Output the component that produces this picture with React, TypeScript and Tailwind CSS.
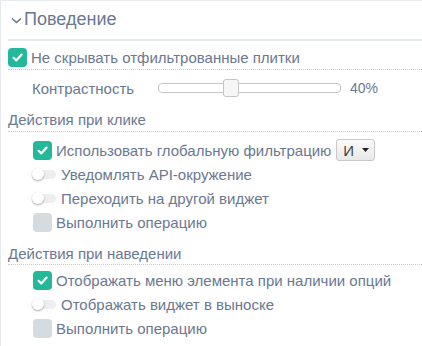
import React from 'react';

const font = { fontFamily: '"Liberation Sans", Arial, sans-serif' };

function Check({ on }: { on: boolean }) {
    return (
        <span
            className={`flex w-[19px] h-[19px] shrink-0 items-center justify-center rounded-[4px] ${
                on ? 'bg-[#22b899]' : 'bg-[#d6dbdf]'
            }`}
        >
            {on && (
                <svg width="13" height="13" viewBox="0 0 13 13" fill="none">
                    <path d="M2.5 6.8 L5.3 9.4 L10.6 3.6" stroke="white" strokeWidth="2.2" strokeLinecap="round" strokeLinejoin="round" />
                </svg>
            )}
        </span>
    );
}

function Toggle() {
    return (
        <span className="relative flex w-[24px] h-[12px] shrink-0 items-center">
            <span className="absolute left-[4px] right-0 h-[9px] rounded-full bg-[#eceef0]" />
            <span className="absolute left-0 top-0 w-[12px] h-[12px] rounded-full bg-white shadow-[0_1px_2px_rgba(0,0,0,0.35)]" />
        </span>
    );
}

function CheckRow({ on, label, children }: { on: boolean; label: string; children?: React.ReactNode }) {
    return (
        <div className="flex h-[24px] items-center gap-[4px] pl-[32px]">
            <Check on={on} />
            <span>{label}</span>
            {children}
        </div>
    );
}

function ToggleRow({ label }: { label: string }) {
    return (
        <div className="flex h-[24px] items-center gap-[5px] pl-[31px]">
            <Toggle />
            <span>{label}</span>
        </div>
    );
}

export default function App() {
    return (
        <div
            className="w-[422px] h-[346px] overflow-hidden bg-white border-t border-l border-[#e6eaee] text-[15px] leading-[17px] text-[#6a7892]"
            style={font}
        >
            {/* Header */}
            <div className="ml-[7px] flex h-[40px] items-center border-b-2 border-[#e4e9ee] pb-[1px]">
                <svg width="13" height="10" viewBox="0 0 13 10" className="ml-[2px] mr-[1px]" fill="none">
                    <path d="M2 3.5 L6.5 7.5 L11 3.5" stroke="#6a7892" strokeWidth="1.6" />
                </svg>
                <span className="text-[18px]">Поведение</span>
            </div>

            {/* Hide filtered tiles */}
            <div className="ml-[7px] flex h-[29px] items-start gap-[4px] border-b border-dotted border-[#c8ccd0] pt-[7px]">
                <Check on />
                <span className="mt-[1px]">Не скрывать отфильтрованные плитки</span>
            </div>

            {/* Contrast */}
            <div className="flex h-[36px] items-center pl-[31px]">
                <span className="w-[126px]">Контрастность</span>
                <div className="relative h-[10px] w-[183px] rounded-[4px] border border-[#c5c5c5] bg-white">
                    <span className="absolute left-[64px] top-[-5px] h-[18px] w-[16px] rounded-[3px] border border-[#c5c5c5] bg-[#f6f6f6]" />
                </div>
                <span className="ml-[9px] text-[14px]">40%</span>
            </div>

            {/* Click actions */}
            <div className="ml-[7px] flex h-[26px] items-start border-b border-dotted border-[#c8ccd0] pt-[5px]">
                <span>Действия при клике</span>
            </div>
            <div className="pt-[6px]">
                <CheckRow on label="Использовать глобальную фильтрацию">
                    <span className="ml-[1px] flex h-[22px] w-[39px] items-center justify-between rounded-[3px] border border-[#c8c8c8] bg-gradient-to-b from-[#fbfbfb] to-[#e8e8e8] pl-[6px] pr-[5px] font-normal text-[#444]">
                        <span className="text-[15px]">И</span>
                        <svg width="7" height="4" viewBox="0 0 7 4">
                            <path d="M0 0 L7 0 L3.5 4 Z" fill="#222" />
                        </svg>
                    </span>
                </CheckRow>
                <ToggleRow label="Уведомлять API-окружение" />
                <ToggleRow label="Переходить на другой виджет" />
                <CheckRow on={false} label="Выполнить операцию" />
            </div>

            {/* Hover actions */}
            <div className="ml-[7px] flex h-[31px] items-start border-b border-dotted border-[#c8ccd0] pt-[11px]">
                <span>Действия при наведении</span>
            </div>
            <div className="pt-[3px]">
                <CheckRow on label="Отображать меню элемента при наличии опций" />
                <ToggleRow label="Отображать виджет в выноске" />
                <CheckRow on={false} label="Выполнить операцию" />
            </div>
        </div>
    );
}
